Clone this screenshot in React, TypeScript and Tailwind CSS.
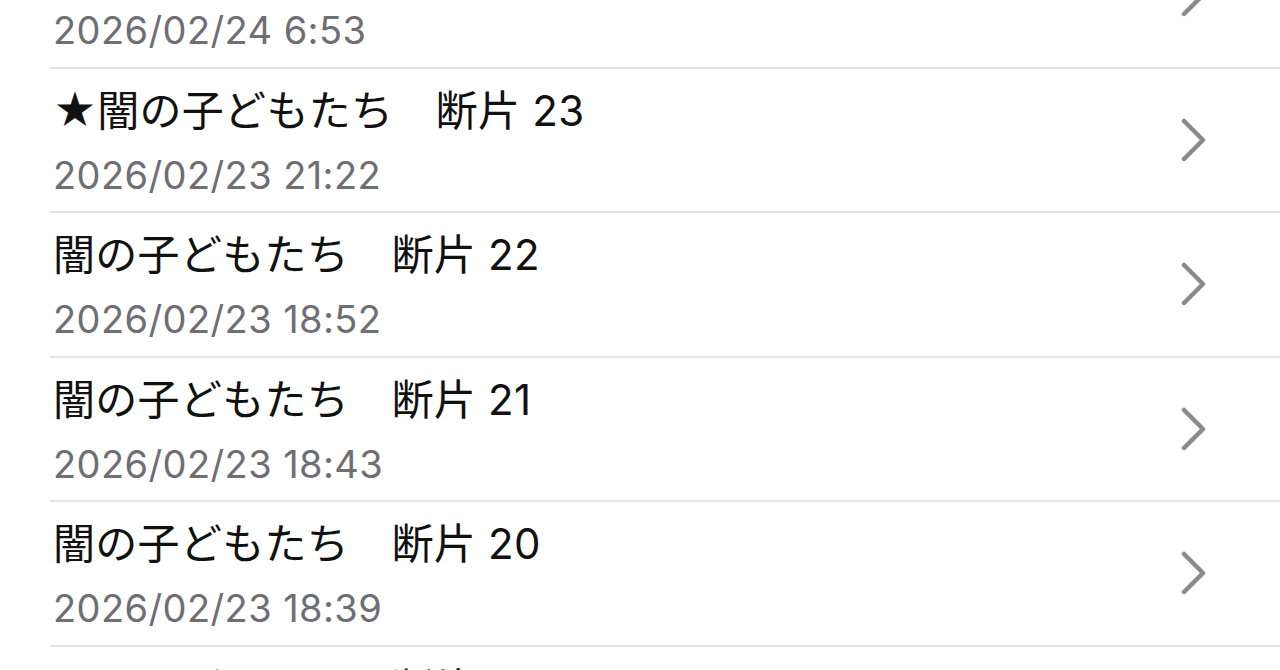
const rows = [
  { title: "闇の子どもたち　断片 24", date: "2026/02/24 6:53" },
  { title: "★闇の子どもたち　断片 23", date: "2026/02/23 21:22" },
  { title: "闇の子どもたち　断片 22", date: "2026/02/23 18:52" },
  { title: "闇の子どもたち　断片 21", date: "2026/02/23 18:43" },
  { title: "闇の子どもたち　断片 20", date: "2026/02/23 18:39" },
  { title: "闇の子どもたち　断片 19", date: "2026/02/23 18:30" },
];

function Chevron() {
  return (
    <svg width="28" height="44" viewBox="0 0 28 44" fill="none">
      <path
        d="M4 3 L23 22 L4 41"
        stroke="#8a8a8e"
        strokeWidth="4.5"
        strokeLinecap="round"
        strokeLinejoin="round"
      />
    </svg>
  );
}

export default function App() {
  return (
    <div className="h-[670px] w-[1280px] overflow-hidden bg-white">
      <ul className="-mt-[76px]">
        {rows.map((row) => (
          <li key={row.date} className="ml-[50px] flex h-[144.5px] items-center border-b-2 border-[#e3e3e6]">
            {/* Title + date */}
            <div className="flex flex-1 flex-col pl-[3px] pt-[4px]">
              <p
                className="text-[42px] leading-[50px] tracking-[0.3px] text-[#111111]"
                style={{ fontFamily: 'Inter, "Noto Sans CJK JP", sans-serif' }}
              >
                {row.title}
              </p>
              <p
                className="mt-[16px] text-[38px] leading-[46px] tracking-[0.4px] text-[#6e6e73]"
                style={{ fontFamily: 'Inter, "Noto Sans CJK JP", sans-serif' }}
              >
                {row.date}
              </p>
            </div>
            <div className="mr-[72px] flex items-center">
              <Chevron />
            </div>
          </li>
        ))}
      </ul>
    </div>
  );
}
